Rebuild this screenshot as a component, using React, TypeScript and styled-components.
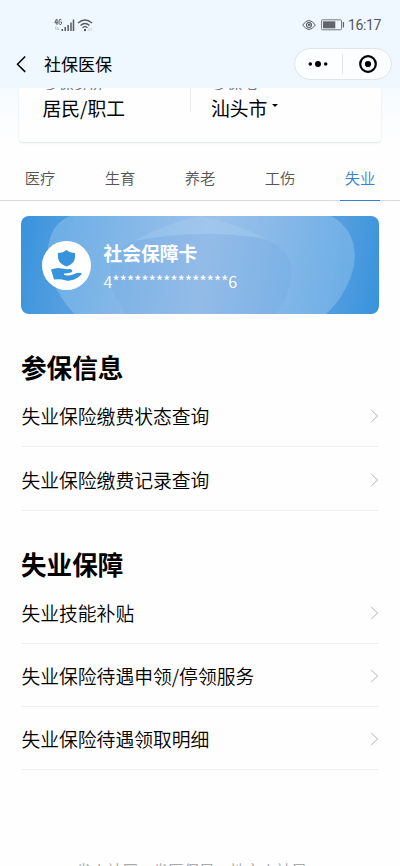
import React from 'react';
import styled, { createGlobalStyle } from 'styled-components';

const GlobalStyle = createGlobalStyle`
  * { box-sizing: border-box; }
  body { margin: 0; background: #fefefe; overflow: hidden; }
`;

const Page = styled.div`
  width: 400px;
  height: 866px;
  overflow: hidden;
  display: flex;
  flex-direction: column;
  font-family: "Noto Sans CJK SC", sans-serif;
  color: #000;
  background: #fefefe;
`;

const Header = styled.header`
  flex: none;
  height: 88px;
  background: #eff7ff;
`;

const StatusBar = styled.div`
  height: 41px;
  padding: 8px 19px 0 54px;
  display: flex;
  align-items: center;
  justify-content: space-between;
`;

const StatusGroup = styled.div`
  display: flex;
  align-items: center;
`;

const StatusIcons = styled(StatusGroup)`
  gap: 5px;
`;

const Clock = styled.span`
  margin-left: 3px;
  font: 14px/16px Roboto, sans-serif;
  letter-spacing: -0.35px;
  color: #54585d;
`;

const NavBar = styled.div`
  height: 47px;
  padding: 0 8px 0 15px;
  display: flex;
  align-items: center;
`;

const Title = styled.h1`
  flex: 1;
  margin: 0 0 2px 15px;
  font-size: 17px;
  line-height: 24px;
  font-weight: 400;
`;

const Capsule = styled.div`
  width: 98px;
  height: 32px;
  margin-bottom: 1px;
  border: 1px solid #dfe5eb;
  border-radius: 16px;
  background: #fcfeff;
  display: flex;
  align-items: center;
`;

const CapsuleButton = styled.div`
  flex: 1;
  height: 20px;
  display: flex;
  align-items: center;
  justify-content: center;
  & + & { border-left: 1px solid #e3e7ea; padding-left: 2px; }
`;

const Summary = styled.section`
  flex: none;
  height: 67px;
  padding: 0 18px;
  background: linear-gradient(#f6fbff, #fefefe 52px);
`;

const SummaryCard = styled.div`
  height: 54px;
  border-radius: 0 0 4px 4px;
  background: #fefefe;
  box-shadow: 0 1px 2px rgba(70, 100, 110, 0.18);
  margin: 0 1px;
  display: flex;
  clip-path: inset(0 -3px -4px -3px);
`;

const SummaryField = styled.div<{ $inset: number }>`
  width: 171px;
  padding-left: ${p => p.$inset}px;
`;

const FieldLabel = styled.div`
  height: 2px;
  padding-left: 1px;
  overflow: hidden;
  font-size: 15px;
  line-height: 15px;
  color: #777;
  display: flex;
  align-items: flex-end;
`;

const FieldValue = styled.div`
  margin-top: 4px;
  font-size: 18.8px;
  line-height: 28px;
  display: flex;
  align-items: center;
  white-space: nowrap;
`;

const Caret = styled.i`
  margin: -6px 0 0 5px;
  border: 3.5px solid transparent;
  border-top-color: #000;
  border-bottom: 0;
`;

const FieldDivider = styled.div`
  width: 1px;
  height: 24px;
  background: #e9e9e9;
`;

const Tabs = styled.nav`
  flex: none;
  height: 46px;
  border-bottom: 1px solid #d8d8d8;
  display: flex;
`;

const Tab = styled.div`
  flex: 1;
  display: flex;
  justify-content: center;
`;

const TabLabel = styled.span<{ $active?: boolean }>`
  width: 40px;
  height: 46px;
  padding-top: 11px;
  text-align: center;
  font-size: 15.3px;
  line-height: 22px;
  font-weight: 350;
  color: ${p => (p.$active ? '#367fd3' : '#555')};
  border-bottom: 1px solid ${p => (p.$active ? '#367fd3' : 'transparent')};
`;

const Content = styled.main`
  flex: none;
  padding: 15px 21px 0;
`;

const InsuranceCard = styled.div`
  position: relative;
  height: 98px;
  border-radius: 8px;
  overflow: hidden;
  padding-left: 21px;
  display: flex;
  align-items: center;
  color: #fff;
  background: linear-gradient(100deg, #3893dc, #98b9e7 51%, #3893dc);
`;

const CardWaves = styled.svg`
  position: absolute;
  inset: 0;
`;

const CardIcon = styled.svg`
  position: relative;
  flex: none;
`;

const CardText = styled.div`
  position: relative;
  margin-left: 12.5px;
  padding-top: 3px;
`;

const CardName = styled.div`
  font-size: 18.8px;
  line-height: 28px;
  font-weight: 700;
`;

const CardNumber = styled.div`
  font-size: 16.3px;
  line-height: 28px;
  font-weight: 350;
  letter-spacing: -0.24px;
  white-space: nowrap;
`;

const Section = styled.section`
  padding-top: 34px;
`;

const SectionTitle = styled.h2`
  margin: 0;
  font-size: 25.6px;
  line-height: 38px;
  font-weight: 700;
`;

const Row = styled.div<{ $first?: boolean }>`
  height: ${p => (p.$first ? 61.4 : 63.2)}px;
  padding: ${p => (p.$first ? 0.6 : 2.4)}px 0 0 0.5px;
  border-bottom: 1px solid #f0f0f0;
  display: flex;
  align-items: center;
  justify-content: space-between;
  font-size: 18.8px;
  line-height: 28px;
  font-weight: 350;
`;

const Footer = styled.footer`
  margin: 87.6px 0 0 55px;
  font-size: 15.4px;
  line-height: 24px;
  color: #aaa;
  white-space: nowrap;
`;

const Chevron = () => (
  <svg width="10" height="14" viewBox="0 0 10 14" fill="none" stroke="#b5b5b5" strokeWidth="1">
    <path d="M2.2 1 8.7 7 2.2 13" />
  </svg>
);

const SignalIcon = () => (
  <svg width="39" height="16" viewBox="0 0 39 16" fill="none" stroke="#565c61">
    <path d="M2.5 2 .8 5.8H4M3 2v6M7.5 3.3C7 1.8 5 2 5 4v2c0 2 2.5 2 2.5.4V5H6.4" strokeWidth="1" />
    <path d="M2 10v3m-1-2 1-1m2 0v3m1-1-1 1" stroke="#a8afb5" strokeWidth=".7" />
    <path d="M8.3 12v2M11.2 10v4M14.1 8v6M17 5.5V14M19.5 2.5V14" strokeWidth="1.5" />
    <path d="M24 6Q31 0 38 6M26.5 8.5Q31 4.5 35.5 8.5M28.5 10.8Q31 8.5 33.5 10.8" strokeWidth="1.3" />
    <circle cx="31" cy="13" r="1.2" fill="#565c61" stroke="none" />
    <path d="M35 11v3m2.2-3v3" stroke="#b6bdc3" strokeWidth=".7" />
  </svg>
);

const EyeIcon = () => (
  <svg width="14" height="12" viewBox="0 0 14 12" fill="none" stroke="#575d62">
    <path d="M.7 6Q7-3 13.3 6 7 15 .7 6Z" strokeWidth="1" />
    <circle cx="7" cy="6" r="2.5" strokeWidth="1.1" />
    <circle cx="7.2" cy="5.7" r="1.3" fill="#575d62" stroke="none" />
  </svg>
);

const BatteryIcon = () => (
  <svg width="24" height="12" viewBox="0 0 24 12">
    <rect x=".5" y=".8" width="20" height="10" rx="1" fill="none" stroke="#777c81" />
    <path d="M2 2.3h12.3v7H2z" fill="#61666a" />
    <path d="M22.4 3v5.5" stroke="#61666a" strokeWidth="1.3" />
  </svg>
);

const groups = [
  { title: '参保信息', items: ['失业保险缴费状态查询', '失业保险缴费记录查询'] },
  { title: '失业保障', items: ['失业技能补贴', '失业保险待遇申领/停领服务', '失业保险待遇领取明细'] },
];

const tabs = ['医疗', '生育', '养老', '工伤', '失业'];

export default function App() {
  return (
    <Page>
      <GlobalStyle />
      <Header>
        <StatusBar>
          <SignalIcon />
          <StatusGroup>
            <StatusIcons><EyeIcon /><BatteryIcon /></StatusIcons>
            <Clock>16:17</Clock>
          </StatusGroup>
        </StatusBar>
        <NavBar>
          <svg width="14" height="18" viewBox="0 0 14 18" fill="none" stroke="#000" strokeWidth="1.5">
            <path d="M10.2.5 2.5 8.2l7.7 7.7" />
          </svg>
          <Title>社保医保</Title>
          <Capsule>
            <CapsuleButton>
              <svg width="20" height="8" viewBox="0 0 20 8">
                <circle cx="2.3" cy="4" r="1.8" /><circle cx="10" cy="4" r="3" /><circle cx="17.7" cy="4" r="1.8" />
              </svg>
            </CapsuleButton>
            <CapsuleButton>
              <svg width="18" height="18" viewBox="0 0 18 18">
                <circle cx="9" cy="9" r="7.8" fill="none" stroke="#000" strokeWidth="2.2" />
                <circle cx="9" cy="9" r="3.1" />
              </svg>
            </CapsuleButton>
          </Capsule>
        </NavBar>
      </Header>
      <Summary>
        <SummaryCard>
          <SummaryField $inset={23.5}>
            <FieldLabel>参保身份</FieldLabel>
            <FieldValue>居民/职工</FieldValue>
          </SummaryField>
          <FieldDivider />
          <SummaryField $inset={20}>
            <FieldLabel>参保地</FieldLabel>
            <FieldValue>汕头市<Caret /></FieldValue>
          </SummaryField>
        </SummaryCard>
      </Summary>
      <Tabs>
        {tabs.map(t => <Tab key={t}><TabLabel $active={t === '失业'}>{t}</TabLabel></Tab>)}
      </Tabs>
      <Content>
        <InsuranceCard>
          <CardWaves width="358" height="98" viewBox="0 0 358 98">
            <path d="M49 0H310C337 14 341 46 322 77Q316 88 305 98H54C31 76 18 39 33 13Q39 4 49 0Z" fill="#a6d0f2" fillOpacity=".38" />
            <path d="M113 25Q145 7 179 0Q215 7 248 24Q184 12 113 25Z" fill="#b9dcf5" fillOpacity=".2" />
            <path d="M105 98C80 66 86 35 113 25Q180 12 240 22C270 31 283 57 255 98Z" fill="#6c9fdd" fillOpacity=".18" />
          </CardWaves>
          <CardIcon width="49" height="49" viewBox="0 0 49 49">
            <circle cx="24.5" cy="24.5" r="24.5" fill="#fff" />
            <path d="M24.5 9Q28 12 33 12V17Q32 23 24.5 25.5Q17 23 16 17V12Q21 12 24.5 9Z" fill="#3794dc" />
            <path d="M9 28.5Q15 26 20 27.5Q24 28.5 28.5 28Q32 30 29 31.5Q25 32.5 22 32.5V34Q27 35 31 33.5Q36 30.5 40 32.5C37 37 30 40.5 24 39.5Q18 37.5 12 38.5Z" fill="#3794dc" />
          </CardIcon>
          <CardText>
            <CardName>社会保障卡</CardName>
            <CardNumber>4****************6</CardNumber>
          </CardText>
        </InsuranceCard>
        {groups.map(g => (
          <Section key={g.title}>
            <SectionTitle>{g.title}</SectionTitle>
            {g.items.map((item, i) => <Row key={item} $first={i === 0}>{item}<Chevron /></Row>)}
          </Section>
        ))}
        <Footer>省人社厅、省医保局、地市人社局</Footer>
      </Content>
    </Page>
  );
}
